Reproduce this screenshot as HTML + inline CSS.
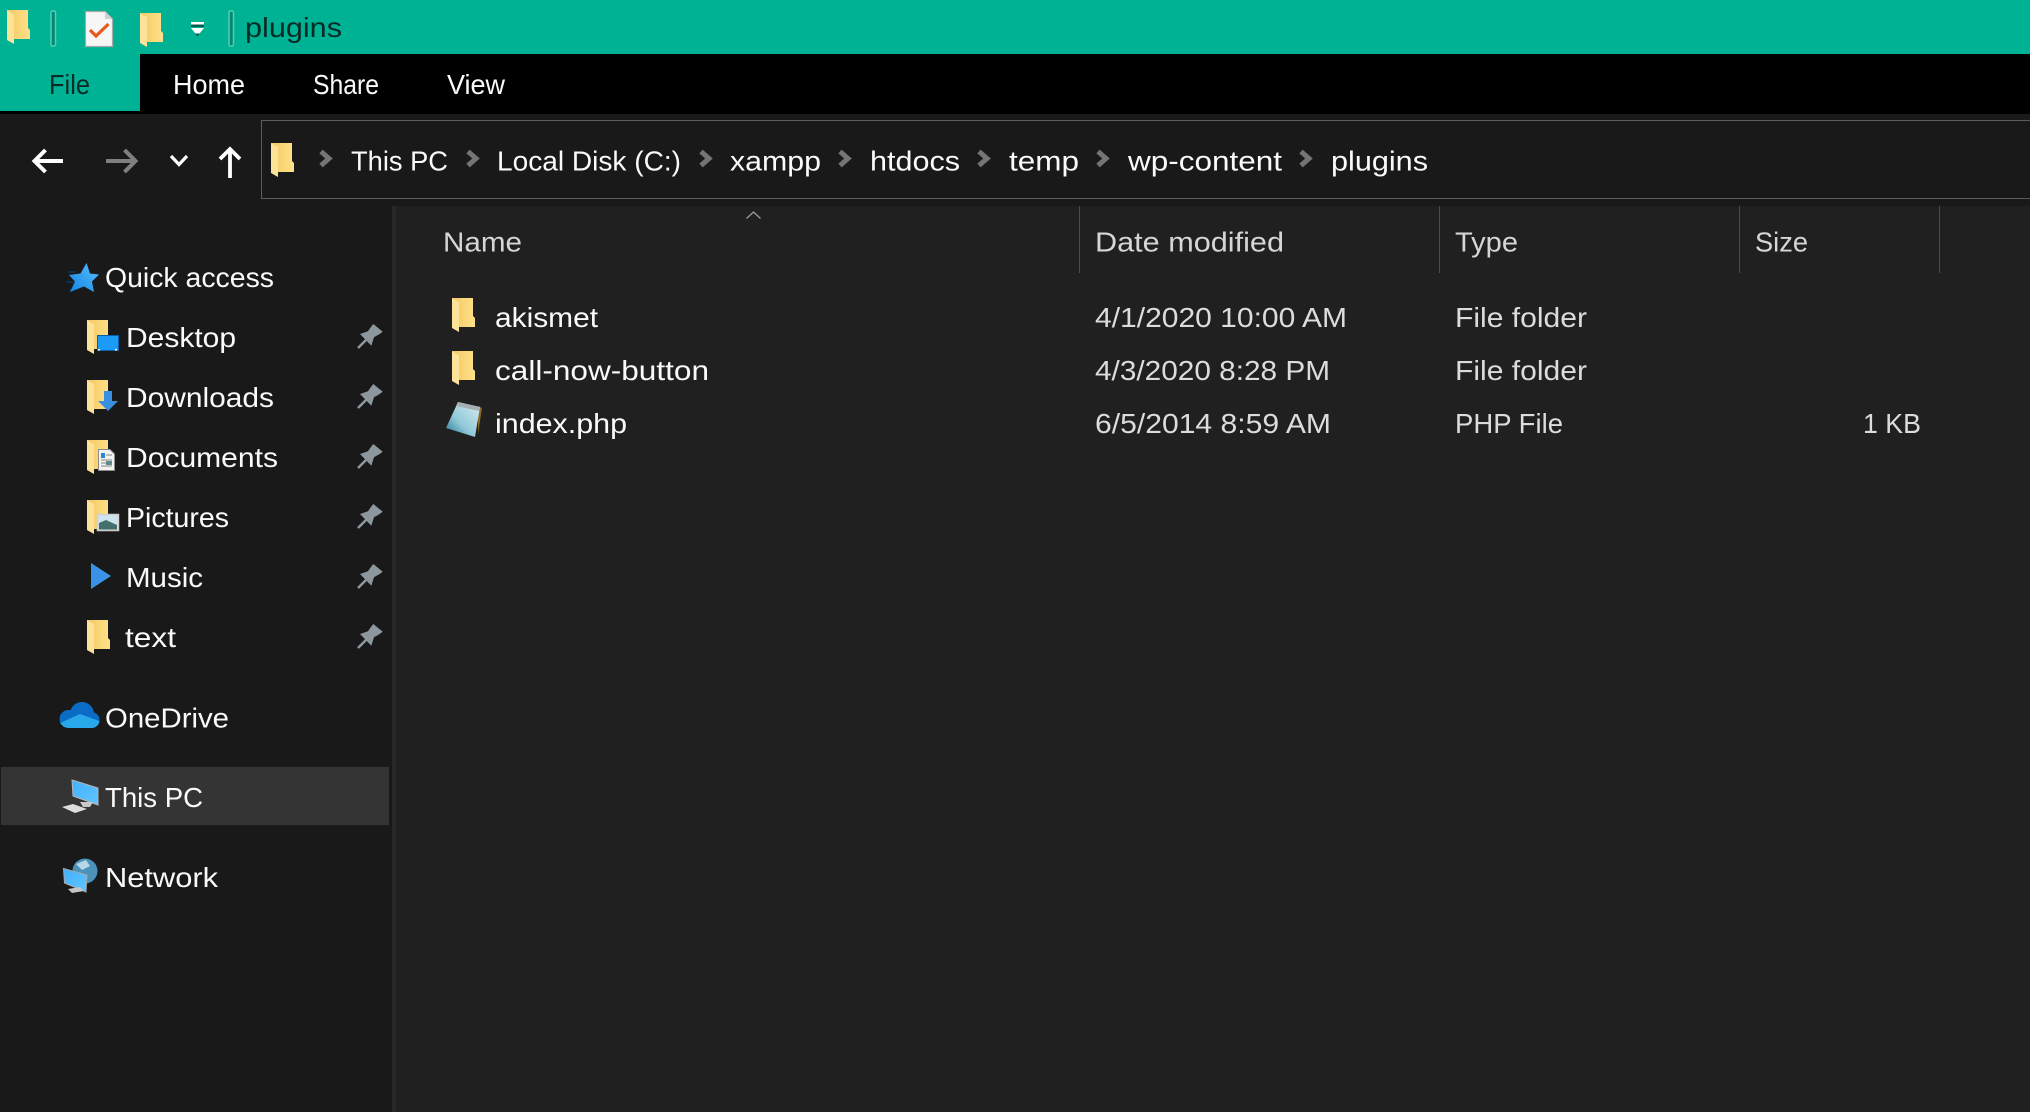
<!DOCTYPE html>
<html><head><meta charset="utf-8"><title>plugins</title>
<style>
html,body{margin:0;padding:0;width:2030px;height:1112px;overflow:hidden;background:#191919}
svg{display:block}
text{font-family:"Liberation Sans",sans-serif;font-size:28px;fill:#fafafa}
.h{fill:#d6d6d6}.d{fill:#dcdcdc}.k{fill:#0a2b25}
</style></head><body>
<svg width="2030" height="1112" viewBox="0 0 2030 1112" xmlns="http://www.w3.org/2000/svg">
<defs>
<linearGradient id="fb" x1="0" y1="0" x2="1" y2="0"><stop offset="0" stop-color="#f0c55f"/><stop offset=".45" stop-color="#f8d474"/><stop offset="1" stop-color="#ffe08a"/></linearGradient>
<symbol id="folder" viewBox="0 0 23 34" width="23" height="34" overflow="visible">
<path d="M0 0H21V18L23 20V29H7V10Z" fill="url(#fb)"/>
<path d="M0 0L7 4V34L0 30Z" fill="#fde39a"/>
</symbol>
<g id="pin">
<path d="M373.3 324L382.7 331.7L379.3 334.3L374 337.3L371.3 345.7L360 334L368 331.3L370.7 327.3Z" fill="#8d979e"/>
<path d="M358 348L366 340" stroke="#8d979e" stroke-width="2.6"/>
</g>
<g id="chev"><path d="M2 1.500L10 8.500L2 15.500" fill="none" stroke="#757575" stroke-width="5"/></g>
<linearGradient id="star" x1="0" y1="1" x2="1" y2="0"><stop offset="0" stop-color="#1284e4"/><stop offset="1" stop-color="#58c0ff"/></linearGradient>
<linearGradient id="scr" x1="0" y1="0" x2="1" y2="1"><stop offset="0" stop-color="#3fb0ff"/><stop offset="1" stop-color="#62c6ff"/></linearGradient>
<linearGradient id="note" x1="0" y1="1" x2="1" y2="0"><stop offset="0" stop-color="#1f6f8c"/><stop offset=".4" stop-color="#8fc8d8"/><stop offset="1" stop-color="#dcedf2"/></linearGradient>
<clipPath id="cloud"><circle cx="82" cy="714" r="12"/><circle cx="68.500" cy="719" r="9"/><circle cx="91.500" cy="720" r="8"/><rect x="68" y="716" width="24" height="12"/></clipPath>
</defs>

<!-- backgrounds -->
<rect width="2030" height="1112" fill="#191919"/>
<rect width="2030" height="54" fill="#00b294"/>
<rect y="54" width="2030" height="60" fill="#000"/>
<rect y="54" width="140" height="57" fill="#00b294"/>
<rect x="392" y="206" width="4" height="906" fill="#282828"/>
<rect x="396" y="206" width="1634" height="906" fill="#202020"/>
<rect x="261.500" y="120.500" width="1800" height="78" fill="#191919" stroke="#5c5c5c"/>
<rect x="1" y="767" width="388" height="58" fill="#343434"/>

<!-- title bar -->
<use href="#folder" x="7" y="10"/>
<rect x="51" y="11" width="4.500" height="35" rx="1.500" fill="#048870" stroke="#52cdb9" stroke-width="1.500"/>
<path d="M85.500 11.500H105L112.500 19V46.500H85.500Z" fill="#f6f6f6" stroke="#a8a8a8" stroke-width="1.200"/>
<path d="M105 11.500V19H112.500Z" fill="#d0d0d0"/>
<path d="M90 30L96 36L108.500 24" fill="none" stroke="#e9581d" stroke-width="3.200"/>
<use href="#folder" x="140" y="13"/>
<rect x="191" y="22" width="13" height="2.500" fill="#fff"/>
<rect x="191" y="24.500" width="13" height="2.500" fill="#045c4c"/>
<path d="M191 28H204L197.500 36Z" fill="#fff"/>
<path d="M195 33.500H200L197.500 36.500Z" fill="#045c4c"/>
<rect x="229" y="11" width="4.500" height="35" rx="1.500" fill="#048870" stroke="#52cdb9" stroke-width="1.500"/>
<text x="245" y="37" class="k" textLength="97" lengthAdjust="spacingAndGlyphs">plugins</text>

<!-- ribbon tabs -->
<text x="49" y="94" class="k" textLength="41" lengthAdjust="spacingAndGlyphs">File</text>
<text x="173" y="94" textLength="72" lengthAdjust="spacingAndGlyphs">Home</text>
<text x="313" y="94" textLength="66" lengthAdjust="spacingAndGlyphs">Share</text>
<text x="447" y="94" textLength="58" lengthAdjust="spacingAndGlyphs">View</text>

<!-- nav -->
<path d="M34 161H63M45.500 150L34.500 161L45.500 172" fill="none" stroke="#fff" stroke-width="4"/>
<path d="M106 161H134M124.500 150L135.500 161L124.500 172" fill="none" stroke="#808080" stroke-width="4"/>
<path d="M171 156L179 164.500L187 156" fill="none" stroke="#fff" stroke-width="3.200"/>
<path d="M230 178V150M220 159L230 149L240 159" fill="none" stroke="#fff" stroke-width="3.800"/>
<use href="#folder" x="271" y="143"/>
<use href="#chev" x="319" y="150"/>
<text x="351" y="170.500" textLength="97" lengthAdjust="spacingAndGlyphs">This PC</text>
<use href="#chev" x="466" y="150"/>
<text x="497" y="170.500" textLength="184" lengthAdjust="spacingAndGlyphs">Local Disk (C:)</text>
<use href="#chev" x="699" y="150"/>
<text x="730" y="170.500" textLength="91" lengthAdjust="spacingAndGlyphs">xampp</text>
<use href="#chev" x="838" y="150"/>
<text x="870" y="170.500" textLength="90" lengthAdjust="spacingAndGlyphs">htdocs</text>
<use href="#chev" x="977" y="150"/>
<text x="1009" y="170.500" textLength="70" lengthAdjust="spacingAndGlyphs">temp</text>
<use href="#chev" x="1096" y="150"/>
<text x="1128" y="170.500" textLength="154" lengthAdjust="spacingAndGlyphs">wp-content</text>
<use href="#chev" x="1299" y="150"/>
<text x="1331" y="170.500" textLength="97" lengthAdjust="spacingAndGlyphs">plugins</text>

<!-- sidebar -->
<path d="M66 282H74M68 272H76M69 290H73" stroke="#0b3f6b" stroke-width="1.200"/>
<path d="M86.500 263L90 273.500L99 274.500L92 281.500L94 292L84 286.500L70 292L75 281.500L69 275L80.500 273.500Z" fill="url(#star)"/>
<text x="105" y="287" textLength="169" lengthAdjust="spacingAndGlyphs">Quick access</text>

<use href="#folder" x="87" y="320"/>
<rect x="97.500" y="335.500" width="21" height="15" fill="#1c9bf6" stroke="#0b5fa8"/>
<rect x="98" y="349" width="2" height="1.500" fill="#fff"/><rect x="115" y="349" width="2" height="1.500" fill="#fff"/>
<text x="126" y="347" textLength="110" lengthAdjust="spacingAndGlyphs">Desktop</text>
<use href="#pin"/>

<use href="#folder" x="87" y="380"/>
<path d="M104 391H112V401H118L108 411L98 401H104Z" fill="#3a8fe0"/>
<text x="126" y="407" textLength="148" lengthAdjust="spacingAndGlyphs">Downloads</text>
<use href="#pin" y="60"/>

<use href="#folder" x="87" y="440"/>
<path d="M98.500 449.500H110L114.500 454V470.500H98.500Z" fill="#f2f2f2" stroke="#8c8c8c"/>
<path d="M101 453H105V458H101Z" fill="#2e86d2"/>
<path d="M106 455H112M101 460H112M101 463H112M101 466H112" stroke="#9a9a9a" stroke-width="1.200"/>
<rect x="106" y="461" width="6" height="4" fill="#5e8a8a"/>
<text x="126" y="467" textLength="152" lengthAdjust="spacingAndGlyphs">Documents</text>
<use href="#pin" y="120"/>

<use href="#folder" x="87" y="500"/>
<rect x="97.500" y="514.500" width="21" height="16" fill="#cfe3ef" stroke="#cfcfcf" stroke-width="1.500"/>
<path d="M99 523L106 520L117 525V529.500H99Z" fill="#43706a"/>
<text x="126" y="527" textLength="103" lengthAdjust="spacingAndGlyphs">Pictures</text>
<use href="#pin" y="180"/>

<path d="M91 563L111 576L91 589Z" fill="#3a92e6"/>
<text x="126" y="587" textLength="77" lengthAdjust="spacingAndGlyphs">Music</text>
<use href="#pin" y="240"/>

<use href="#folder" x="87" y="620"/>
<text x="125" y="647" textLength="51" lengthAdjust="spacingAndGlyphs">text</text>
<use href="#pin" y="300"/>

<g clip-path="url(#cloud)">
<rect x="58" y="700" width="44" height="30" fill="#0a6cc4"/>
<path d="M58 724L80 714L102 722V730H58Z" fill="#28a8ea"/>
</g>
<text x="105" y="727.500" textLength="124" lengthAdjust="spacingAndGlyphs">OneDrive</text>

<path d="M72 780L98 788V805L73 796Z" fill="url(#scr)" stroke="#b5b5b5"/>
<path d="M80 802H93L90 807H83Z" fill="#c8c8c8"/>
<path d="M62 807L73 804L87 809L75 813Z" fill="#dcdcdc"/>
<text x="105" y="807" textLength="98" lengthAdjust="spacingAndGlyphs">This PC</text>

<circle cx="85" cy="871" r="12.500" fill="#4a92ba"/>
<path d="M76 864L86 860L90 866L82 870Z" fill="#b6d8e6"/>
<path d="M63.500 868.500L87 875L86 892L64.500 883Z" fill="url(#scr)" stroke="#a8a8a8"/>
<path d="M68 889L80 887L84 891L72 893Z" fill="#c4c4c4"/>
<text x="105" y="887" textLength="113" lengthAdjust="spacingAndGlyphs">Network</text>

<!-- header -->
<path d="M746.500 218.500L753.500 212L760.500 218.500" fill="none" stroke="#9a9a9a" stroke-width="1.300"/>
<text x="443" y="251.500" class="h" textLength="79" lengthAdjust="spacingAndGlyphs">Name</text>
<rect x="1079" y="206" width="1" height="67" fill="#4c4c4c"/>
<text x="1095" y="251.500" class="h" textLength="189" lengthAdjust="spacingAndGlyphs">Date modified</text>
<rect x="1439" y="206" width="1" height="67" fill="#4c4c4c"/>
<text x="1455" y="251.500" class="h" textLength="63" lengthAdjust="spacingAndGlyphs">Type</text>
<rect x="1739" y="206" width="1" height="67" fill="#4c4c4c"/>
<text x="1755" y="251.500" class="h" textLength="53" lengthAdjust="spacingAndGlyphs">Size</text>
<rect x="1939" y="206" width="1" height="67" fill="#4c4c4c"/>

<!-- rows -->
<use href="#folder" x="452" y="298"/>
<text x="495" y="327" textLength="103" lengthAdjust="spacingAndGlyphs">akismet</text>
<text x="1095" y="327" class="d" textLength="252" lengthAdjust="spacingAndGlyphs">4/1/2020 10:00 AM</text>
<text x="1455" y="327" class="d" textLength="132" lengthAdjust="spacingAndGlyphs">File folder</text>

<use href="#folder" x="452" y="351"/>
<text x="495" y="380" textLength="214" lengthAdjust="spacingAndGlyphs">call-now-button</text>
<text x="1095" y="380" class="d" textLength="235" lengthAdjust="spacingAndGlyphs">4/3/2020 8:28 PM</text>
<text x="1455" y="380" class="d" textLength="132" lengthAdjust="spacingAndGlyphs">File folder</text>

<path d="M478 406L482 408L478 434Z" fill="#8a6a2c"/>
<path d="M458 402L480 407L475 437L446 428Z" fill="url(#note)"/>
<path d="M458 402L480 407L479 411L456 406Z" fill="#a6b0b4"/>
<text x="495" y="433" textLength="132" lengthAdjust="spacingAndGlyphs">index.php</text>
<text x="1095" y="433" class="d" textLength="236" lengthAdjust="spacingAndGlyphs">6/5/2014 8:59 AM</text>
<text x="1455" y="433" class="d" textLength="108" lengthAdjust="spacingAndGlyphs">PHP File</text>
<text x="1863" y="433" class="d" textLength="58" lengthAdjust="spacingAndGlyphs">1 KB</text>
</svg>
</body></html>
